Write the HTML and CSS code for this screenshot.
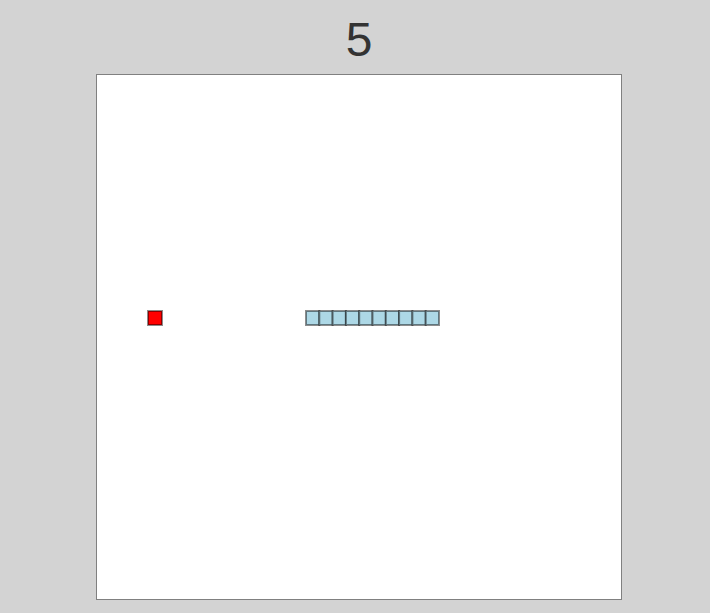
FILE: index.html
```html
<!DOCTYPE html>
<html>
<head>
<meta charset="utf-8">
<link rel="stylesheet" href="styles.css">
</head>
<body>
<div class="game">
  <div class="score">5</div>
  <div class="board">
    <svg class="field" width="524" height="524" viewBox="0 0 524 524">
      <rect class="food" x="51" y="236" width="14" height="14"/>
      <g class="snake">
        <rect x="209" y="236" width="13.3" height="14"/>
        <rect x="222.3" y="236" width="13.3" height="14"/>
        <rect x="235.6" y="236" width="13.3" height="14"/>
        <rect x="248.9" y="236" width="13.3" height="14"/>
        <rect x="262.2" y="236" width="13.3" height="14"/>
        <rect x="275.5" y="236" width="13.3" height="14"/>
        <rect x="288.8" y="236" width="13.3" height="14"/>
        <rect x="302.1" y="236" width="13.3" height="14"/>
        <rect x="315.4" y="236" width="13.3" height="14"/>
        <rect x="328.7" y="236" width="13.3" height="14"/>
      </g>
    </svg>
  </div>
</div>
</body>
</html>
```
FILE: styles.css
```css
html, body {
  margin: 0;
  padding: 0;
  background: #d3d3d3;
  height: 100%;
  overflow: hidden;
}
.game {
  display: flex;
  flex-direction: column;
  align-items: flex-start;
  padding-left: 96px;
}
.score {
  width: 526px;
  text-align: center;
  font-family: "Liberation Sans", Arial, sans-serif;
  font-size: 48px;
  line-height: 54px;
  padding-top: 13px;
  color: #333333;
}
.board {
  margin-top: 7px;
  width: 524px;
  height: 524px;
  border: 1px solid #808080;
  background: #ffffff;
}
.field {
  display: block;
}
.food {
  fill: #ff0000;
  stroke: rgba(0, 0, 0, 0.45);
  stroke-width: 2;
}
.snake rect {
  fill: #add8e6;
  stroke: rgba(0, 0, 0, 0.45);
  stroke-width: 2;
}
```
